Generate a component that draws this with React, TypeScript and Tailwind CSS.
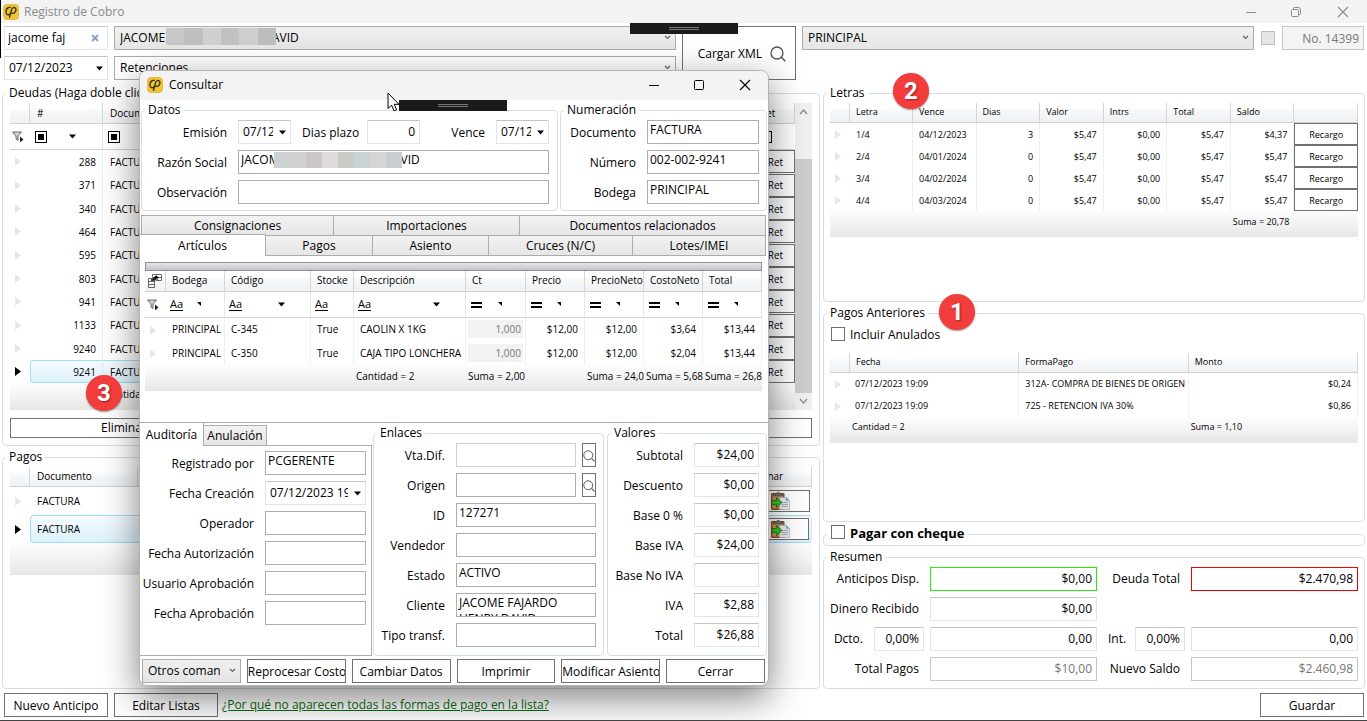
import React, { useId } from "react";
import { clsx } from "clsx";

/* ---------- icons ---------- */

function AppIcon() {
  return (
    <svg width="16" height="16" viewBox="0 0 16 16" aria-hidden="true">
      <rect x="0.5" y="0.5" width="15" height="15" rx="3.5" fill="#f2c32e" stroke="#dba818" strokeWidth="0.6" />
      <path
        d="M7.200 3.200C4.600 3.400 2.900 5.500 3 8c.1 1.900 1.200 2.900 2.600 2.700 1-.2 1.700-.9 2.100-1.900M6.500 13.400L8.600 5.600C9.200 3.900 10.500 3.100 11.700 3.600c1.300.6 1.500 2.200.9 3.700-.6 1.500-1.900 2.300-3.600 2"
        fill="none"
        stroke="#3b3526"
        strokeWidth="1.400"
        strokeLinecap="round"
      />
    </svg>
  );
}

function MinIcon() {
  return (
    <svg width="12" height="12" viewBox="0 0 12 12" aria-hidden="true">
      <path d="M1 6.500H11" stroke="currentColor" />
    </svg>
  );
}
function MaxIcon() {
  return (
    <svg width="12" height="12" viewBox="0 0 12 12" aria-hidden="true">
      <rect x="1.500" y="1.500" width="9" height="9" rx="1" fill="none" stroke="currentColor" />
    </svg>
  );
}
function RestoreIcon() {
  return (
    <svg width="12" height="12" viewBox="0 0 12 12" aria-hidden="true">
      <rect x="1.500" y="3.500" width="7" height="7" rx="1" fill="none" stroke="currentColor" />
      <path d="M3.500 3V2.500Q3.500 1.500 4.500 1.500H8.500Q10.500 1.500 10.500 3.500V7.500Q10.500 8.500 9.500 8.500H9" fill="none" stroke="currentColor" />
    </svg>
  );
}
function CloseIcon() {
  return (
    <svg width="12" height="12" viewBox="0 0 12 12" aria-hidden="true">
      <path d="M1 1L11 11M11 1L1 11" stroke="currentColor" strokeWidth="1.100" />
    </svg>
  );
}
function SearchIcon({ className }: { className: string }) {
  return (
    <svg className={className} viewBox="0 0 16 16" aria-hidden="true">
      <circle cx="7" cy="7" r="6" fill="none" stroke="#555" strokeWidth="1.300" />
      <path d="M11.300 11.300L15.300 15.300" stroke="#555" strokeWidth="1.500" />
    </svg>
  );
}
function Down({ small }: { small?: boolean }) {
  return small ? (
    <svg width="5" height="5" viewBox="0 0 5 5" aria-hidden="true">
      <path d="M0 0H4V4Z" fill="#000" />
    </svg>
  ) : (
    <svg width="8" height="5" viewBox="0 0 8 5" aria-hidden="true">
      <path d="M0 0.500H7L3.500 4.500Z" fill="#000" />
    </svg>
  );
}
function Chevron({ className }: { className?: string }) {
  return (
    <svg className={className} width="7" height="5" viewBox="0 0 7 5" aria-hidden="true">
      <path d="M1 1L3.500 3.500L6 1" fill="none" stroke="#606060" strokeWidth="1.100" />
    </svg>
  );
}
function ScrollArrow({ className }: { className?: string }) {
  return (
    <svg className={className} width="9" height="7" viewBox="0 0 9 7" aria-hidden="true">
      <path d="M1 1L4.500 5L8 1" fill="none" stroke="#8a8a8a" strokeWidth="1.300" />
    </svg>
  );
}
function RowMark({ active }: { active?: boolean }) {
  return (
    <svg className="ml-[5px]" width="6" height="9" viewBox="0 0 6 9" aria-hidden="true">
      <path d="M0 0L6 4.500L0 9Z" fill={active ? "#000" : "#e6e6e6"} />
    </svg>
  );
}
function Funnel() {
  return (
    <svg className="ml-[2px]" width="12" height="12" viewBox="0 0 12 12" aria-hidden="true">
      <path d="M0.500 1H9.500L6 4.800V9.500L4 8V4.800Z" fill="#d8d8d8" stroke="#555" strokeWidth="0.900" />
      <path d="M8 5.500L11.500 8.500L8 11.500Z" fill="#222" />
    </svg>
  );
}
function ColumnChooser() {
  return (
    <svg className="ml-[3px]" width="15" height="14" viewBox="0 0 15 14" aria-hidden="true">
      <path d="M4.500 3.500V0.500H13.500V6.500H7.500M4.500 3.500H13.500M9.500 4V6.500" fill="none" stroke="#666" />
      <path d="M0.500 4.500H6.500V13.500H0.500ZM0.500 7.500H6.500M0.500 10.500H6.500" fill="none" stroke="#666" />
      <path d="M3 6H5.500V5H8V3" fill="none" stroke="#000" strokeWidth="1.300" />
      <path d="M5.500 4L8.200 1.200L11 4Z" fill="#000" />
    </svg>
  );
}
function Clipboard() {
  return (
    <svg width="20" height="18" viewBox="0 0 20 18" aria-hidden="true">
      <rect x="0.500" y="1.500" width="12.500" height="16" rx="0.500" fill="#b5763f" stroke="#7d4a22" />
      <rect x="2" y="4" width="10" height="12" fill="#c9925c" />
      <path d="M2.500 3.800V1.800H5.200L6.200 0.400H8.200L9.200 1.800H11.500V3.800Z" fill="#77736f" stroke="#4b4744" strokeWidth="0.600" />
      <path d="M8.500 5.500H14.500L18.500 9V17.500H8.500Z" fill="#eef0f2" stroke="#b4bac0" strokeWidth="0.800" />
      <path d="M14.800 4.500V8.800H18.800Z" fill="#6db4ea" />
      <path d="M10.500 10.500H17M10.500 12.500H17M10.500 14.500H17" stroke="#a4abb2" strokeWidth="0.900" />
      <path d="M1 8.500H5.500V5.500L11 10.500L5.500 15.500V12.500H1Z" fill="#35c321" stroke="#1c7d14" strokeWidth="0.900" />
    </svg>
  );
}

/* ---------- form parts ---------- */

type Tone = "box" | "num" | "off" | "green" | "red" | "faint";

const toneClass: Record<Tone, string> = {
  box: "border-[#abadb3] pb-[5px]",
  num: "border-[#e0e4ec] border-t-[#c3c3cc] pb-[2px]",
  off: "border-[#c8c8c8] pb-[2px] text-[#777]",
  green: "border-[#22f00a] pb-[2px]",
  red: "border-[#f40000] pb-[2px]",
  faint: "border-[#cfcfcf] pb-1",
};

function Box({ id, value, tone = "box", right, label }: { id?: string; value: string; tone?: Tone; right?: boolean; label?: string }) {
  return (
    <input
      id={id}
      aria-label={label}
      defaultValue={value}
      readOnly={tone === "off"}
      className={clsx("block h-6 w-full min-w-0 border bg-white outline-none", toneClass[tone], right ? "px-1 text-right" : "px-[2px]")}
    />
  );
}

function DateBox({ id, value, label }: { id?: string; value: string; label?: string }) {
  return (
    <div className="flex h-6 w-full min-w-0 items-center border border-[#e0e4ec] border-t-[#c3c3cc] bg-white pr-[3px]">
      <input id={id} aria-label={label} defaultValue={value} className="ml-1 min-w-0 flex-1 bg-transparent outline-none" />
      <button type="button" aria-label="Abrir calendario" className="flex w-[14px] shrink-0 justify-end">
        <Down />
      </button>
    </div>
  );
}

function Combo({ value, label, plain }: { value: string; label: string; plain?: boolean }) {
  return (
    <div className="relative h-6 w-full min-w-0">
      <select
        aria-label={label}
        className={clsx(
          "h-full w-full appearance-none border border-[#acacac] pr-5 pl-[5px] outline-none",
          plain ? "bg-white" : "bg-linear-to-b from-[#f0f0f0] to-[#e5e5e5]",
        )}
      >
        <option>{value}</option>
      </select>
      <Chevron className="pointer-events-none absolute top-[9px] right-[5px]" />
    </div>
  );
}

function Group({ title, className, body, children }: { title: React.ReactNode; className?: string; body?: string; children?: React.ReactNode }) {
  return (
    <fieldset className={clsx("min-w-0 rounded-[4px] border border-[#d5dfe5]", className)}>
      <legend className="ml-[3px] px-[3px] leading-4">{title}</legend>
      <div className={body}>{children}</div>
    </fieldset>
  );
}

function Label({ htmlFor, children }: { htmlFor?: string; children: React.ReactNode }) {
  return (
    <label htmlFor={htmlFor} className="pt-px text-right whitespace-nowrap">
      {children}
    </label>
  );
}

function Row({ label, value, tone, right }: { label: string; value: string; tone?: Tone; right?: boolean }) {
  const id = useId();
  return (
    <>
      <Label htmlFor={id}>{label}</Label>
      <Box id={id} value={value} tone={tone} right={right} />
    </>
  );
}

function Btn({ children, className }: { children: React.ReactNode; className?: string }) {
  return (
    <button type="button" className={clsx("h-6 overflow-hidden border border-[#707070] bg-white pt-px text-center whitespace-nowrap", className)}>
      {children}
    </button>
  );
}

function Mosaic({ colors, className }: { colors: string[]; className: string }) {
  return (
    <span className={clsx("absolute flex", className)} aria-hidden="true">
      {colors.map((c, i) => (
        <span key={i} className="flex-1" style={{ background: c }} />
      ))}
    </span>
  );
}

/* ---------- grid parts ---------- */

const th = "overflow-hidden border-r border-b border-r-[#d5d5d8] border-b-[#cfd0d2] bg-linear-to-b from-white from-30% via-[#f8f9fa] via-35% to-[#f0f1f3] pr-1 text-left font-normal whitespace-nowrap";
const td = "overflow-hidden border-r border-[#f0f0f0] whitespace-nowrap";
const foot = "bg-linear-to-b from-[#fdfdfd] via-[#f3f3f4] to-[#e6e6e7] whitespace-nowrap";
const sel = "border-y border-y-[#9fdcf8] border-r-[#d5ecf7] bg-linear-to-b from-[#f5fbfe] to-[#dcf1fb]";

function Cols({ widths }: { widths: string[] }) {
  return (
    <colgroup>
      {widths.map((w, i) => (
        <col key={i} className={w} />
      ))}
    </colgroup>
  );
}

const TableBase = "w-full table-fixed border-separate border-spacing-0";

function FilterBox() {
  return (
    <span className="flex size-3 items-center justify-center border border-black">
      <span className="size-[6px] bg-black" />
    </span>
  );
}

const deudas = ["288", "371", "340", "464", "595", "803", "941", "1133", "9240", "9241"];

function DeudasTable() {
  return (
    <table className={clsx(TableBase, "text-[10px]")}>
      <Cols widths={["w-[20px]", "w-[73px]", "w-auto", "w-[39px]"]} />
      <thead>
        <tr className="h-[21px]">
          <th className={th} />
          <th className={clsx(th, "pl-[7px]")}>#</th>
          <th className={clsx(th, "pl-[7px]")}>Documento</th>
          <th className={clsx(th, "pl-1")}>Ret</th>
        </tr>
        <tr className="h-[26px]">
          <td className="border-b border-[#cfd0d2]">
            <Funnel />
          </td>
          <td className="border-r border-b border-[#e8e8e8] border-b-[#cfd0d2]">
            <div className="flex items-center gap-[22px] pl-[5px]">
              <FilterBox />
              <Down />
            </div>
          </td>
          <td className="border-b border-[#cfd0d2] pl-[5px]">
            <FilterBox />
          </td>
          <td className="border-b border-[#cfd0d2] pl-1">
            <FilterBox />
          </td>
        </tr>
      </thead>
      <tbody>
        {deudas.map((n, i) => {
          const on = n === "9241";
          return (
            <tr key={n} className={i % 3 === 1 ? "h-6" : "h-[23px]"}>
              <td>
                <RowMark active={on} />
              </td>
              <td className={clsx(td, "pr-[6px] text-right", on && sel, on && "rounded-l-[4px] border-l border-l-[#9fdcf8]")}>{n}</td>
              <td className={clsx(td, "pl-[7px]", on && sel)}>FACTURA</td>
              <td className="p-0">
                <button type="button" className="block h-[23px] w-full border border-[#707070] bg-white">
                  Ret
                </button>
              </td>
            </tr>
          );
        })}
      </tbody>
      <tfoot>
        <tr className="h-[27px]">
          <td className={foot} colSpan={2} />
          <td className={clsx(foot, "pb-[5px] pl-[2px]")} colSpan={2}>
            Cantidad = 10
          </td>
        </tr>
      </tfoot>
    </table>
  );
}

function PagosTable() {
  return (
    <table className={clsx(TableBase, "text-[10px]")}>
      <Cols widths={["w-[20px]", "w-[108px]", "w-auto", "w-[68px]"]} />
      <thead>
        <tr className="h-5">
          <th className={th} />
          <th className={clsx(th, "pb-[2px] pl-[7px]")}>Documento</th>
          <th className={th} />
          <th className={clsx(th, "pb-[2px] pl-px")}>Eliminar</th>
        </tr>
      </thead>
      <tbody>
        {[false, true].map((on, i) => (
          <tr key={i} className="h-7">
            <td>
              <RowMark active={on} />
            </td>
            <td className={on ? clsx(sel, "rounded-l-[4px] border-l border-l-[#9fdcf8] pl-[6px]") : "pl-[7px]"}>FACTURA</td>
            <td className={clsx(on && sel, on && "border-r-0")} />
            <td className={clsx("py-0 pr-[2px] pl-5", on && sel, on && "rounded-r-[4px] border-r border-r-[#9fdcf8]")}>
              <button type="button" aria-label="Eliminar pago" className="flex h-[22px] w-full items-center border border-[#707070] bg-white pl-[6px]">
                <Clipboard />
              </button>
            </td>
          </tr>
        ))}
      </tbody>
      <tfoot>
        <tr className="h-8">
          <td className={foot} colSpan={4} />
        </tr>
      </tfoot>
    </table>
  );
}

const letras = [
  ["1/4", "04/12/2023", "3", "$5,47", "$0,00", "$5,47", "$4,37"],
  ["2/4", "04/01/2024", "0", "$5,47", "$0,00", "$5,47", "$5,47"],
  ["3/4", "04/02/2024", "0", "$5,47", "$0,00", "$5,47", "$5,47"],
  ["4/4", "04/03/2024", "0", "$5,47", "$0,00", "$5,47", "$5,47"],
];

function LetrasTable() {
  return (
    <table className={clsx(TableBase, "text-[9px]")}>
      <Cols widths={["w-[20px]", "w-[63px]", "w-auto", "w-auto", "w-auto", "w-auto", "w-auto", "w-auto", "w-auto"]} />
      <thead>
        <tr className="h-5">
          {["", "Letra", "Vence", "Dias", "Valor", "Intrs", "Total", "Saldo", ""].map((h, i) => (
            <th key={i} className={clsx(th, "pb-[2px] pl-[6px]")}>
              {h}
            </th>
          ))}
        </tr>
      </thead>
      <tbody>
        {letras.map((r) => (
          <tr key={r[0]} className="h-[22px]">
            <td>
              <RowMark />
            </td>
            {r.map((c, i) => (
              <td key={i} className={clsx(td, "pt-[2px]", i > 1 ? "pr-[6px] text-right" : "pl-[6px]")}>
                {c}
              </td>
            ))}
            <td className="p-0">
              <button type="button" className="block h-[22px] w-full border border-[#707070] bg-white pt-[2px]">
                Recargo
              </button>
            </td>
          </tr>
        ))}
      </tbody>
      <tfoot>
        <tr className="h-[26px]">
          <td className={foot} colSpan={7} />
          <td className={clsx(foot, "pb-1 pl-[2px]")} colSpan={2}>
            Suma = 20,78
          </td>
        </tr>
      </tfoot>
    </table>
  );
}

function AnterioresTable() {
  const rows = [
    ["07/12/2023 19:09", "312A- COMPRA DE BIENES DE ORIGEN", "$0,24"],
    ["07/12/2023 19:09", "725 - RETENCION IVA 30%", "$0,86"],
  ];
  return (
    <table className={clsx(TableBase, "text-[9px]")}>
      <Cols widths={["w-[20px]", "w-auto", "w-auto", "w-auto"]} />
      <thead>
        <tr className="h-5">
          {["", "Fecha", "FormaPago", "Monto"].map((h) => (
            <th key={h} className={clsx(th, "pb-[2px] pl-[6px]")}>
              {h}
            </th>
          ))}
        </tr>
      </thead>
      <tbody>
        {rows.map((r) => (
          <tr key={r[1]} className="h-[22px]">
            <td>
              <RowMark />
            </td>
            <td className={clsx(td, "pl-[5px]")}>{r[0]}</td>
            <td className={clsx(td, "pl-[6px]")}>{r[1]}</td>
            <td className={clsx(td, "pr-[6px] text-right")}>{r[2]}</td>
          </tr>
        ))}
      </tbody>
      <tfoot>
        <tr className="h-[26px]">
          <td className={foot} />
          <td className={clsx(foot, "pb-[6px] pl-[2px]")} colSpan={2}>
            Cantidad = 2
          </td>
          <td className={clsx(foot, "pb-[6px] pl-[2px]")}>Suma = 1,10</td>
        </tr>
      </tfoot>
    </table>
  );
}

function ArticulosTable() {
  const heads = ["Bodega", "Código", "Stocke", "Descripción", "Ct", "Precio", "PrecioNeto", "CostoNeto", "Total"];
  const rows = [
    ["PRINCIPAL", "C-345", "True", "CAOLIN X 1KG", "1,000", "$12,00", "$12,00", "$3,64", "$13,44"],
    ["PRINCIPAL", "C-350", "True", "CAJA TIPO LONCHERA", "1,000", "$12,00", "$12,00", "$2,04", "$13,44"],
  ];
  return (
    <table className={clsx(TableBase, "text-[10px]")}>
      <Cols widths={["w-[21px]", "w-[59px]", "w-[86px]", "w-[43px]", "w-[112px]", "w-[60px]", "w-[59px]", "w-[59px]", "w-[59px]", "w-auto"]} />
      <thead>
        <tr className="h-[21px]">
          <th className={clsx(th, "pr-0")}>
            <ColumnChooser />
          </th>
          {heads.map((h) => (
            <th key={h} className={clsx(th, "pb-[2px] pl-[6px]")}>
              {h}
            </th>
          ))}
        </tr>
        <tr className="h-[26px]">
          <td className="border-b border-[#cfd0d2]">
            <Funnel />
          </td>
          {heads.map((h, i) => (
            <td key={h} className="border-r border-b border-[#e8e8e8] border-b-[#cfd0d2] pr-[18px] pl-1">
              <div className="flex items-center justify-between">
                {i < 4 ? (
                  <span className="border-b border-black text-[11px] leading-3">Aa</span>
                ) : (
                  <svg className="ml-px" width="11" height="6" viewBox="0 0 11 6" aria-hidden="true">
                    <path d="M0 1H11M0 5H11" stroke="#000" strokeWidth="2" />
                  </svg>
                )}
                {i === 2 ? null : i === 1 || i === 3 ? (
                  <span className="pr-[6px]">
                    <Down />
                  </span>
                ) : (
                  <span className="pr-1">
                    <Down small />
                  </span>
                )}
              </div>
            </td>
          ))}
        </tr>
      </thead>
      <tbody>
        {rows.map((r, n) => (
          <tr key={r[1]} className={n ? "h-[23px]" : "h-6"}>
            <td>
              <RowMark />
            </td>
            {r.map((c, i) => (
              <td key={i} className={clsx(td, i > 4 ? "pr-[6px] pb-[2px] text-right" : i === 4 ? "px-[2px] pt-0 pb-[2px]" : "pb-[2px] pl-[6px]")}>
                {i === 4 ? <div className="h-[18px] bg-[#f2f2f2] pr-[2px] text-right leading-[18px] text-[#777]">{c}</div> : c}
              </td>
            ))}
          </tr>
        ))}
      </tbody>
      <tfoot>
        <tr className="h-[26px]">
          <td className={foot} colSpan={4} />
          {["Cantidad = 2", "Suma = 2,00", "", "Suma = 24,00", "Suma = 5,68", "Suma = 26,88"].map((t, i) => (
            <td key={i} className={clsx(foot, "overflow-hidden pb-[5px] pl-[2px]")}>
              {t}
            </td>
          ))}
        </tr>
      </tfoot>
    </table>
  );
}

/* ---------- overlays ---------- */

function GrabBar({ className }: { className: string }) {
  return (
    <div className={clsx("absolute flex h-[11px] w-[108px] flex-col items-center justify-center gap-px bg-[#1a1a1a]", className)}>
      <span className="h-px w-[30px] bg-[#777]" />
      <span className="h-px w-[30px] bg-[#777]" />
    </div>
  );
}

function Marker({ n, className }: { n: number; className: string }) {
  return (
    <div
      className={clsx(
        "absolute flex size-9 items-center justify-center rounded-full bg-[#f33c3c] font-[Roboto,sans-serif] text-[24px] font-bold text-white shadow-[0_1px_2px_rgba(0,0,0,0.4)] [text-shadow:1px_1px_2px_rgba(0,0,0,0.4)]",
        className,
      )}
    >
      {n}
    </div>
  );
}

function Tab({ children, className }: { children: React.ReactNode; className?: string }) {
  return (
    <button type="button" role="tab" className={clsx("border border-[#acacac] bg-linear-to-b from-[#f2f2f2] to-[#e6e6e6] leading-[18px]", className)}>
      {children}
    </button>
  );
}

/* ---------- dialog ---------- */

function Consultar() {
  const ids = { em: useId(), dp: useId(), ve: useId(), rs: useId(), ob: useId(), fc: useId(), vd: useId(), og: useId(), cl: useId() };
  return (
    <section
      role="dialog"
      aria-label="Consultar"
      className="absolute top-[70px] left-[139px] flex w-[630px] flex-col rounded-lg border border-[#b4b4b4] bg-white shadow-[0_12px_36px_rgba(0,0,0,0.5)]"
    >
      <header className="flex h-[29px] items-center rounded-t-lg bg-[#f3f3f3] pb-px pl-[7px]">
        <AppIcon />
        <h2 className="flex-1 pl-[6px] text-left">Consultar</h2>
        <button type="button" aria-label="Minimizar" className="flex w-[45px] justify-center"><MinIcon /></button>
        <button type="button" aria-label="Maximizar" className="flex w-[45px] justify-center"><MaxIcon /></button>
        <button type="button" aria-label="Cerrar ventana" className="flex w-[47px] justify-center"><CloseIcon /></button>
      </header>

      <div className="flex gap-[2px] pt-[2px] pr-px pl-px">
        <Group title="Datos" className="w-[417px]" body="flex flex-col gap-[6px] pt-[2px] pb-[6px]">
          <div className="grid grid-cols-[85px_53px_54px_53px_54px_53px] items-center gap-x-[11px]">
            <Label htmlFor={ids.em}>Emisión</Label>
            <DateBox id={ids.em} value="07/12/2023" />
            <Label htmlFor={ids.dp}>Dias plazo</Label>
            <Box id={ids.dp} value="0" tone="num" right />
            <Label htmlFor={ids.ve}>Vence</Label>
            <DateBox id={ids.ve} value="07/12/2023" />
          </div>
          <div className="grid grid-cols-[85px_311px] items-center gap-x-[11px]">
            <Label htmlFor={ids.rs}>Razón Social</Label>
            <div className="relative">
              <Box id={ids.rs} value="JACOME FAJARDO HENRY DAVID" />
              <Mosaic className="top-[2px] left-9 h-4 w-32" colors={["#ccd1d3", "#d2d1d0", "#c9c8c7", "#dfdbdc", "#cbcbc8", "#c9d2d5", "#d5d5d3", "#cacdcf"]} />
            </div>
          </div>
          <div className="grid grid-cols-[85px_311px] items-center gap-x-[11px]">
            <Label htmlFor={ids.ob}>Observación</Label>
            <Box id={ids.ob} value="" />
          </div>
        </Group>
        <Group title="Numeración" className="flex-1" body="grid grid-cols-[75px_1fr] items-center gap-x-[11px] gap-y-[6px] pt-[2px] pr-[7px] pb-[6px]">
          <Row label="Documento" value="FACTURA" />
          <Row label="Número" value="002-002-9241" />
          <Row label="Bodega" value="PRINCIPAL" />
        </Group>
      </div>

      <div role="tablist" className="mt-1 pr-[2px]">
        <div className="flex h-[21px] pl-px">
          <Tab className="w-[193px]">Consignaciones</Tab>
          <Tab className="w-[186px] border-l-0">Importaciones</Tab>
          <Tab className="flex-1 border-l-0">Documentos relacionados</Tab>
        </div>
        <div className="flex h-5">
          <Tab className="-mt-[2px] w-[126px] border-b-0 border-l-0 from-white to-white">Artículos</Tab>
          <Tab className="w-[107px] border-t-0 border-l-0">Pagos</Tab>
          <Tab className="w-[116px] border-t-0 border-l-0">Asiento</Tab>
          <Tab className="w-[144px] border-t-0 border-l-0">Cruces (N/C)</Tab>
          <Tab className="flex-1 border-t-0 border-l-0">Lotes/IMEI</Tab>
        </div>
      </div>
      <div className="h-[167px] border-b border-[#acacac] pt-[6px] pr-[6px] pl-[5px]">
        <div className="h-[9px] border border-[#8e8f94] bg-linear-to-b from-[#e6e6e8] to-[#c4c5c9]" />
        <ArticulosTable />
      </div>

      <div className="flex gap-px">
        <div className="w-[232px]">
          <div role="tablist" className="flex h-[23px] items-end">
            <Tab className="h-[23px] w-[64px] border-0 border-r from-white to-white">Auditoría</Tab>
            <Tab className="h-[21px] w-[63px] border-l-0">Anulación</Tab>
          </div>
          <div className="-mt-px h-[211px] border-t border-r border-b border-[#acacac]">
            <div className="grid grid-cols-[114px_101px] items-center gap-x-[11px] gap-y-[6px] pt-[5px]">
              <Row label="Registrado por" value="PCGERENTE" />
              <Label htmlFor={ids.fc}>Fecha Creación</Label>
              <DateBox id={ids.fc} value="07/12/2023 19:09" />
              <Row label="Operador" value="" />
              <Row label="Fecha Autorización" value="" />
              <Row label="Usuario Aprobación" value="" />
              <Row label="Fecha Aprobación" value="" />
            </div>
          </div>
        </div>
        <Group title="Enlaces" className="mt-[2px] w-[231px]" body="grid grid-cols-[71px_140px] items-center gap-x-[11px] gap-y-[6px] pt-[2px] pb-[6px]">
          <Label htmlFor={ids.vd}>Vta.Dif.</Label>
          <div className="flex gap-[6px]">
            <Box id={ids.vd} value="" tone="faint" />
            <Btn className="w-[14px] shrink-0"><SearchIcon className="size-3" /></Btn>
          </div>
          <Label htmlFor={ids.og}>Origen</Label>
          <div className="flex gap-[6px]">
            <Box id={ids.og} value="" />
            <Btn className="w-[14px] shrink-0"><SearchIcon className="size-3" /></Btn>
          </div>
          <Row label="ID" value="127271" />
          <Row label="Vendedor" value="" />
          <Row label="Estado" value="ACTIVO" />
          <Label htmlFor={ids.cl}>Cliente</Label>
          <textarea
            id={ids.cl}
            defaultValue="JACOME FAJARDO HENRY DAVID"
            className="block h-6 w-full resize-none overflow-hidden border border-[#abadb3] pt-px pr-6 pl-[2px] leading-4 outline-none"
          />
          <Row label="Tipo transf." value="" />
        </Group>
        <Group title="Valores" className="mt-[2px] mr-px ml-[2px] flex-1" body="grid grid-cols-[75px_1fr] items-center gap-x-[11px] gap-y-[6px] pt-[2px] pr-[7px] pb-[6px]">
          <Row label="Subtotal" value="$24,00" tone="num" right />
          <Row label="Descuento" value="$0,00" tone="num" right />
          <Row label="Base 0 %" value="$0,00" tone="num" right />
          <Row label="Base IVA" value="$24,00" tone="num" right />
          <Row label="Base No IVA" value="" tone="num" right />
          <Row label="IVA" value="$2,88" tone="num" right />
          <Row label="Total" value="$26,88" tone="num" right />
        </Group>
      </div>

      <div className="grid grid-cols-6 gap-[6px] pt-[3px] pr-[3px] pb-[2px] pl-[2px]">
        <Combo label="Otros comandos" value="Otros comandos" />
        <Btn>Reprocesar Costos</Btn>
        <Btn>Cambiar Datos</Btn>
        <Btn>Imprimir</Btn>
        <Btn>Modificar Asiento</Btn>
        <Btn>Cerrar</Btn>
      </div>

      <svg className="absolute top-[21px] left-[247px]" width="13" height="20" viewBox="0 0 13 20" aria-hidden="true">
        <path d="M1 1V16.500L4.600 13.200L7 18.800L9.600 17.700L7.200 12.300H12Z" fill="#fff" stroke="#000" />
      </svg>
      <GrabBar className="top-[29px] left-[259px]" />
    </section>
  );
}

/* ---------- page ---------- */

export default function App() {
  const ids = { ad: useId(), dr: useId(), dc: useId(), dt: useId(), it: useId(), tp: useId(), ns: useId() };
  return (
    <div className="relative flex min-h-screen flex-col overflow-hidden border-b border-[#444] bg-white font-['Open_Sans','Noto_Sans',sans-serif] text-[12px] leading-4 text-black">
      <div className="absolute top-0 left-0 h-[58px] w-px bg-black" />
      <header className="flex h-[23px] items-center bg-[#f3f3f3] pl-[3px] text-[#8a8a8a]">
        <AppIcon />
        <h1 className="flex-1 pl-[5px]">Registro de Cobro</h1>
        <button type="button" aria-label="Minimizar" className="flex w-[45px] justify-center"><MinIcon /></button>
        <button type="button" aria-label="Restaurar" className="flex w-[45px] justify-center"><RestoreIcon /></button>
        <button type="button" aria-label="Cerrar" className="flex w-[49px] justify-center"><CloseIcon /></button>
      </header>

      <div className="grid grid-cols-[104px_562fr_114px_452fr_16px_82px] gap-[6px] pt-[3px] pr-[3px] pl-1">
        <div className="flex h-6 items-center border border-[#e0e4ec] border-t-[#c3c3cc] pr-2">
          <input aria-label="Buscar cliente" defaultValue="jacome faj" className="min-w-0 flex-1 pl-[3px] outline-none" />
          <button type="button" aria-label="Limpiar">
            <svg width="8" height="8" viewBox="0 0 8 8" aria-hidden="true">
              <path d="M1 1L7 7M7 1L1 7" stroke="#7fa3c4" strokeWidth="1.800" />
            </svg>
          </button>
        </div>
        <div className="relative min-w-0">
          <Combo label="Cliente" value="JACOME FAJARDO HENRY DAVID" />
          <Mosaic className="top-[2px] left-[52px] h-[17px] w-[110px]" colors={["#c9c8c8", "#bfc0be", "#d0d0d1", "#c2c2c0", "#cfcfd1", "#bdbdbc"]} />
        </div>
        <button type="button" className="row-span-2 flex items-center justify-end gap-2 border border-[#707070] bg-white pt-px pr-[9px]">
          Cargar XML
          <SearchIcon className="size-4" />
        </button>
        <Combo label="Bodega" value="PRINCIPAL" />
        <input type="checkbox" aria-label="Número manual" disabled className="size-[14px] appearance-none self-center justify-self-center border border-[#bcbcbc] bg-[#e6e6e6]" />
        <input aria-label="Número" disabled defaultValue="No. 14399" className="h-6 w-full border border-[#c8c8c8] bg-[#f4f4f4] px-1 text-right text-[#777]" />
        <DateBox label="Fecha" value="07/12/2023" />
        <Combo label="Tipo" value="Retenciones" plain />
      </div>

      <main className="grid flex-1 grid-cols-[818fr_542fr] gap-x-[3px] px-[2px] pt-[5px]">
        <div className="flex min-w-0 flex-col gap-[3px]">
          <Group title="Deudas (Haga doble clic para seleccionar)" body="px-[7px] pt-[2px] pb-[7px]">
            <div className="flex">
              <div className="min-w-0 flex-1">
                <DeudasTable />
              </div>
              <div className="flex w-[17px] flex-col items-center bg-[#f0f0f0]">
                <ScrollArrow className="my-[5px] rotate-180" />
                <div className="mt-[39px] w-full flex-1 bg-[#cdcdcd]" />
                <ScrollArrow className="my-[5px]" />
              </div>
            </div>
            <button type="button" className="mt-2 block h-5 w-full border border-[#707070] bg-white pl-[90px] text-left">
              Eliminar
            </button>
          </Group>
          <Group title="Pagos" className="flex-1" body="px-[7px] pt-[2px]">
            <PagosTable />
          </Group>
        </div>

        <div className="flex min-w-0 flex-col gap-[3px]">
          <Group title="Letras" className="flex-1" body="px-[6px] pt-[2px]">
            <LetrasTable />
          </Group>
          <Group title="Pagos Anteriores" className="flex-1" body="px-[6px]">
            <label className="flex h-8 items-start gap-[5px] pt-[6px] pl-px">
              <input type="checkbox" className="size-[14px] appearance-none border border-[#707070] bg-white" />
              Incluir Anulados
            </label>
            <AnterioresTable />
          </Group>
          <Group
            title={
              <label className="flex h-[18px] items-center gap-[5px] pb-[2px] pl-px text-[13px] font-bold">
                <input type="checkbox" className="mb-[2px] size-[14px] appearance-none border border-[#707070] bg-white" />
                Pagar con cheque
              </label>
            }
            body="h-[2px]"
          />
          <Group title="Resumen" body="grid grid-cols-[44px_50px_1fr_26px_50px_1fr] items-center gap-x-[6px] gap-y-[6px] pt-[2px] pr-[6px] pb-[7px]">
            <span className="col-span-2 pr-[5px] text-right"><Label htmlFor={ids.ad}>Anticipos Disp.</Label></span>
            <Box id={ids.ad} value="$0,00" tone="green" right />
            <span className="col-span-2 pr-[5px] text-right"><Label htmlFor={ids.dt}>Deuda Total</Label></span>
            <Box id={ids.dt} value="$2.470,98" tone="red" right />
            <span className="col-span-2 pr-[5px] text-right"><Label htmlFor={ids.dr}>Dinero Recibido</Label></span>
            <Box id={ids.dr} value="$0,00" tone="num" right />
            <span className="col-span-3" />
            <span className="pr-[5px] text-right"><Label htmlFor={ids.dc}>Dcto.</Label></span>
            <Box id={ids.dc} value="0,00%" tone="num" right />
            <Box label="Valor del descuento" value="0,00" tone="num" right />
            <span className="pl-[5px]"><Label htmlFor={ids.it}>Int.</Label></span>
            <Box id={ids.it} value="0,00%" tone="num" right />
            <Box label="Valor del interés" value="0,00" tone="num" right />
            <span className="col-span-2 pr-[5px] text-right"><Label htmlFor={ids.tp}>Total Pagos</Label></span>
            <Box id={ids.tp} value="$10,00" tone="off" right />
            <span className="col-span-2 pr-[5px] text-right"><Label htmlFor={ids.ns}>Nuevo Saldo</Label></span>
            <Box id={ids.ns} value="$2.460,98" tone="off" right />
          </Group>
        </div>
      </main>

      <footer className="flex items-center gap-[6px] pt-1 pr-[3px] pb-[3px] pl-1">
        <Btn className="w-[104px]">Nuevo Anticipo</Btn>
        <Btn className="w-[104px]">Editar Listas</Btn>
        <a href="#ayuda" className="-ml-[2px] flex-1 text-[#0a6b12] underline">
          ¿Por qué no aparecen todas las formas de pago en la lista?
        </a>
        <Btn className="w-[104px]">Guardar</Btn>
      </footer>

      <Consultar />
      <GrabBar className="top-[23px] left-[630px]" />
      <Marker n={2} className="top-[73px] left-[893px]" />
      <Marker n={1} className="top-[294px] left-[939px]" />
      <Marker n={3} className="top-[375px] left-[86px]" />
    </div>
  );
}
